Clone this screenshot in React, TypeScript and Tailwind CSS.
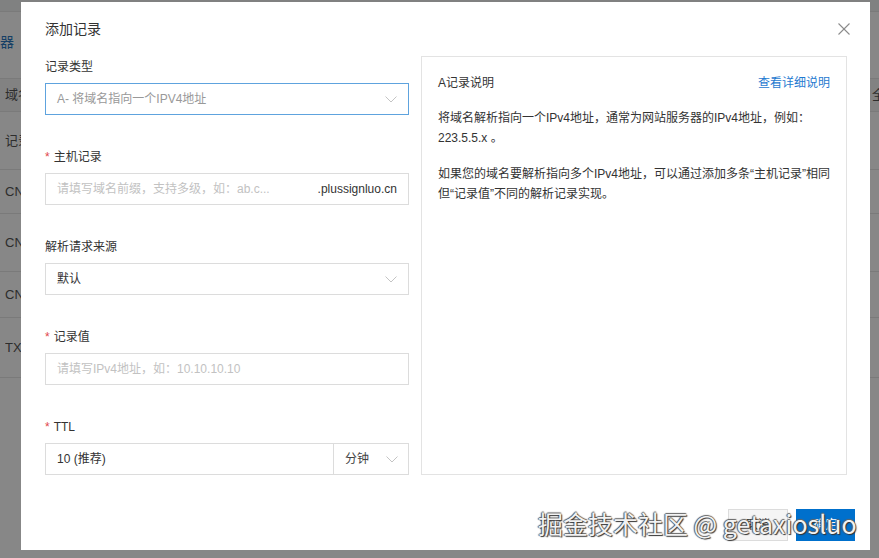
import React from 'react';

function Chevron() {
	return (
		<svg width="12" height="7" viewBox="0 0 12 7" className="shrink-0">
			<polyline points="0.5,0.5 6,6 11.5,0.5" fill="none" stroke="#c4c4c4" strokeWidth="1" />
		</svg>
	);
}

function Label({ text, required }: { text: string; required?: boolean }) {
	return (
		<div className="h-[20px] mb-[6px] flex items-center text-[12px] text-[#333]">
			{required && <span className="text-[#e0474c] mr-[4px] text-[12px]">*</span>}
			{text}
		</div>
	);
}

function BgRow({ h, left, right, dark }: { h: string; left: string; right?: string; dark?: boolean }) {
	return (
		<div className={`${h} flex items-center justify-between border-b border-[#e6e6e6] text-[13px] text-[#555] ${dark ? 'bg-[#f6f6f6]' : ''}`}>
			<span className="ml-[5px] w-[16px] overflow-hidden whitespace-nowrap">{left}</span>
			{right && <span className="w-[7px] overflow-hidden whitespace-nowrap">{right}</span>}
		</div>
	);
}

function App() {
	return (
		<div className="relative w-[879px] h-[558px] overflow-hidden bg-white font-['Liberation_Sans','Noto_Sans_CJK_SC',sans-serif]">
			{/* page behind the dialog */}
			<div className="flex flex-col">
				<div className="h-[79px] border-b border-[#e6e6e6] flex flex-col">
					<div className="h-[12px] border-b border-[#e6e6e6] bg-[#f2f4f3]" />
					<div className="pt-[22px] text-[14px] text-[#2a78c0] leading-[16px]">器</div>
				</div>
				<BgRow h="h-[33px]" left="域名" right="全部" dark />
				<BgRow h="h-[58px]" left="记录" />
				<BgRow h="h-[44px]" left="CN" />
				<BgRow h="h-[58px]" left="CN" />
				<BgRow h="h-[46px]" left="CN" />
				<BgRow h="h-[60px]" left="TXT" />
			</div>

			<div className="absolute inset-0 bg-black/[0.47]" />

			{/* dialog */}
			<div className="absolute left-[21px] top-[2px] w-[849px] h-[548px] bg-white flex flex-col">
				<div className="flex justify-between pl-[24px] pr-[20px] pt-[17px] h-[54px] items-start">
					<h2 className="text-[14px] leading-[20px] text-[#333]">添加记录</h2>
					<svg width="12" height="12" viewBox="0 0 12 12" className="mt-[4px]">
						<line x1="0.5" y1="0.5" x2="11.5" y2="11.5" stroke="#8c8c8c" strokeWidth="1.1" />
						<line x1="11.5" y1="0.5" x2="0.5" y2="11.5" stroke="#8c8c8c" strokeWidth="1.1" />
					</svg>
				</div>

				<div className="flex gap-[12px] pl-[24px] pr-[23px]">
					<div className="w-[364px] flex flex-col pt-[1px]">
						<Label text="记录类型" />
						<div className="h-[32px] border border-[#5ea3de] flex items-center justify-between px-[11px] text-[12px] text-[#999]">
							<span>A- 将域名指向一个IPV4地址</span>
							<Chevron />
						</div>

						<div className="mt-[32px]">
							<Label text="主机记录" required />
							<div className="h-[32px] border border-[#dcdcdc] flex items-center justify-between px-[11px] text-[12px]">
								<span className="text-[#c2c2c2]">请填写域名前缀，支持多级，如：ab.c...</span>
								<span className="text-[#333]">.plussignluo.cn</span>
							</div>
						</div>

						<div className="mt-[32px]">
							<Label text="解析请求来源" />
							<div className="h-[32px] border border-[#dcdcdc] flex items-center justify-between px-[11px] text-[12px] text-[#333]">
								<span>默认</span>
								<Chevron />
							</div>
						</div>

						<div className="mt-[32px]">
							<Label text="记录值" required />
							<div className="h-[32px] border border-[#dcdcdc] flex items-center px-[11px] text-[12px] text-[#c2c2c2]">
								请填写IPv4地址，如：10.10.10.10
							</div>
						</div>

						<div className="mt-[32px]">
							<Label text="TTL" required />
							<div className="h-[32px] flex">
								<div className="w-[289px] border border-[#dcdcdc] flex items-center px-[11px] text-[12px] text-[#333]">
									10 (推荐)
								</div>
								<div className="flex-1 border border-l-0 border-[#dcdcdc] flex items-center justify-between pl-[11px] pr-[10px] text-[12px] text-[#444]">
									<span>分钟</span>
									<Chevron />
								</div>
							</div>
						</div>
					</div>

					<div className="flex-1 border border-[#e3e3e3] px-[16px] pt-[16px] text-[12px] text-[#333]">
						<div className="flex justify-between leading-[20px]">
							<span>A记录说明</span>
							<span className="text-[#1f7ad0]">查看详细说明</span>
						</div>
						<p className="mt-[15px] leading-[20px]">
							<span className="whitespace-nowrap">将域名解析指向一个IPv4地址，通常为网站服务器的IPv4地址，例如：</span>
							<br />
							223.5.5.x 。
						</p>
						<p className="mt-[16px] leading-[20px]">
							<span className="whitespace-nowrap">如果您的域名要解析指向多个IPv4地址，可以通过添加多条“主机记录”相同</span>
							<br />
							但“记录值”不同的解析记录实现。
						</p>
					</div>
				</div>

				<div className="mt-auto flex justify-end gap-[8px] pr-[15px] pb-[9px]">
					<button className="w-[60px] h-[32px] bg-[#f5f5f5] border border-[#dcdcdc] text-[12px] text-[#333]">取消</button>
					<button className="w-[59px] h-[32px] bg-[#0070cc] text-[12px] text-white">确定</button>
				</div>
			</div>

			{/* watermark */}
			<div className="absolute left-[538px] top-[506px] text-[25px] leading-[34px] whitespace-nowrap text-[#f2f2f2] [text-shadow:1px_1px_1px_#333,-1px_0_1px_#555,0_-1px_1px_#666] font-['Noto_Sans_CJK_SC','Liberation_Sans',sans-serif]">
				掘金技术社区 @ getaxiosluo
			</div>
		</div>
	);
}

export default App;
